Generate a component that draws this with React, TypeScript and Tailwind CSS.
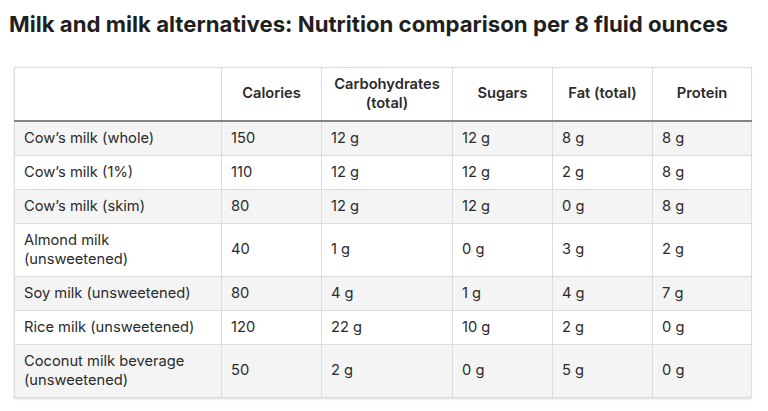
const rows: [string, string, string, string, string, string][] = [
  ["Cow’s milk (whole)", "150", "12 g", "12 g", "8 g", "8 g"],
  ["Cow’s milk (1%)", "110", "12 g", "12 g", "2 g", "8 g"],
  ["Cow’s milk (skim)", "80", "12 g", "12 g", "0 g", "8 g"],
  ["Almond milk (unsweetened)", "40", "1 g", "0 g", "3 g", "2 g"],
  ["Soy milk (unsweetened)", "80", "4 g", "1 g", "4 g", "7 g"],
  ["Rice milk (unsweetened)", "120", "22 g", "10 g", "2 g", "0 g"],
  ["Coconut milk beverage (unsweetened)", "50", "2 g", "0 g", "5 g", "0 g"],
];

const headers = ["Calories", "Carbohydrates (total)", "Sugars", "Fat (total)", "Protein"];

export default function App() {
  return (
    <div className="min-h-[411px] bg-white font-['Inter',sans-serif] text-[#222]">
      <h1 className="px-[9px] pt-[10px] text-[22.2px] font-bold leading-[28px] text-[#1f1f1f]">
        Milk and milk alternatives: Nutrition comparison per 8 fluid ounces
      </h1>

      <div className="mx-[14px] mt-[29px] w-[737px] shadow-[0_1px_2px_rgba(0,0,0,0.15)]">
        <table className="w-full table-fixed border-collapse text-[14.7px] leading-[19px]">
          <colgroup>
            <col className="w-[207px]" />
            <col className="w-[100px]" />
            <col className="w-[131px]" />
            <col className="w-[100px]" />
            <col className="w-[100px]" />
            <col className="w-[99px]" />
          </colgroup>
          <thead>
            <tr className="h-[53px]">
              <th className="border border-b-2 border-[#dcdcdc] border-b-[#858585]"></th>
              {headers.map((h) => (
                <th
                  key={h}
                  className="border border-b-2 border-[#dcdcdc] border-b-[#858585] px-[10px] text-center font-semibold text-[#2b2b2b]"
                >
                  {h}
                </th>
              ))}
            </tr>
          </thead>
          <tbody>
            {rows.map((row, i) => (
              <tr key={row[0]} className={i % 2 === 0 ? "bg-[#f4f4f4]" : "bg-white"}>
                {row.map((cell, j) => (
                  <td
                    key={j}
                    className="border border-[#dcdcdc] px-[9px] py-[7px] align-middle text-[#2b2b2b]"
                  >
                    {cell}
                  </td>
                ))}
              </tr>
            ))}
          </tbody>
        </table>
      </div>
    </div>
  );
}
